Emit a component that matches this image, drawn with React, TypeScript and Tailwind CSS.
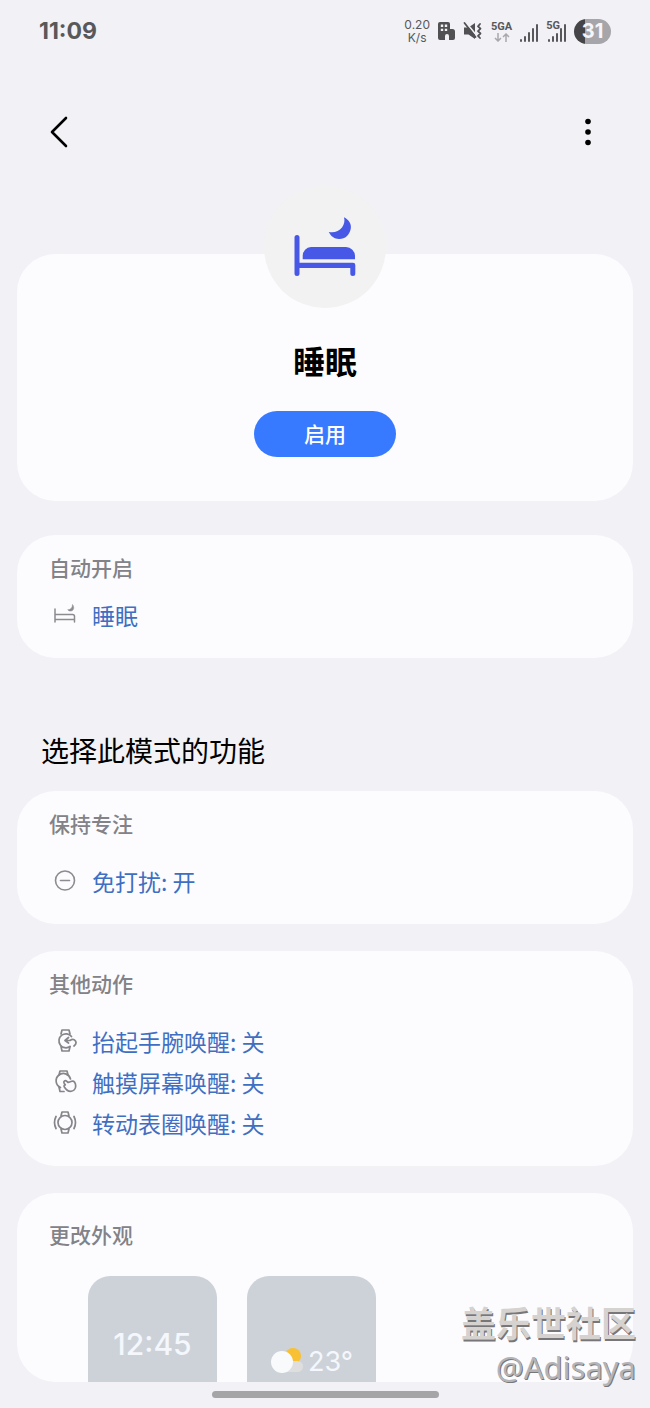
import type { ReactNode } from "react";

const cardClass = "rounded-[38px] bg-[#fcfcff] px-8";

const StatusBar = () => (
  <div className="flex h-[62px] items-center justify-between px-[39px] font-[Inter,'Noto_Sans_CJK_SC',sans-serif] text-[#58585b]">
    <span className="text-[23px] font-bold">11:09</span>
    <div className="flex items-center gap-2">
      <div className="text-center text-[12px] leading-[13px]">
        <div>0.20</div>
        <div>K/s</div>
      </div>
      <svg width="17" height="20" viewBox="0 0 17 20" aria-hidden="true">
        <path
          fill="#515154"
          d="M2 1h8a2 2 0 0 1 2 2v5h2.500a2.500 2.500 0 0 1 2.500 2.500V17a2 2 0 0 1-2 2h-4v-4a2 2 0 0 0-4 0v4H2a2 2 0 0 1-2-2V3a2 2 0 0 1 2-2Z"
        />
        <path fill="#f1f1f6" d="M2.800 3.500h2.400v2.400H2.800zM6.800 3.500h2.400v2.400H6.800zM2.800 7.700h2.400v2.400H2.800zM6.800 7.700h2.400v2.400H6.800z" />
      </svg>
      <svg width="20" height="20" viewBox="0 0 20 20" fill="none" aria-hidden="true">
        <path fill="#515154" d="M1 6.500h4.500L12 2v16l-6.500-4.500H1Z" />
        <path stroke="#f1f1f6" strokeWidth="1.800" d="M2.500 1l11.500 14" />
        <path stroke="#515154" strokeWidth="1.800" strokeLinecap="round" d="M1.500 2l11 14" />
        <path
          stroke="#515154"
          strokeWidth="1.800"
          strokeLinecap="round"
          strokeLinejoin="round"
          d="M17 3l-2 2.300 2.500 2.400-2.500 2.400 2.500 2.400-2.500 2.300 2 2.200"
        />
      </svg>
      <div className="flex flex-col items-center">
        <span className="font-[Roboto,sans-serif] text-[11px] leading-3 font-bold">5GA</span>
        <svg width="16" height="9" viewBox="0 0 16 9" fill="none" stroke="#a9a9ad" strokeWidth="1.500" aria-hidden="true">
          <path d="M4 0v8M1 5l3 3 3-3M12 9V1M9 4l3-3 3 3" />
        </svg>
      </div>
      <svg width="18" height="22" viewBox="0 0 18 22" fill="#58585b" aria-hidden="true">
        <rect x="0" y="19" width="2" height="3" rx="1" />
        <rect x="4" y="16" width="2" height="6" rx="1" />
        <rect x="8" y="12" width="2" height="10" rx="1" />
        <rect x="12" y="8" width="2" height="14" rx="1" />
        <rect x="16" y="4" width="2" height="18" rx="1" />
      </svg>
      <div className="flex items-start">
        <span className="-mr-3 font-[Roboto,sans-serif] text-[11px] leading-3 font-bold">5G</span>
        <svg width="18" height="22" viewBox="0 0 18 22" fill="#58585b" aria-hidden="true">
          <rect x="0" y="19" width="2" height="3" rx="1" />
          <rect x="4" y="16" width="2" height="6" rx="1" />
          <rect x="8" y="13" width="2" height="9" rx="1" />
          <rect x="12" y="8" width="2" height="14" rx="1" />
          <rect x="16" y="4" width="2" height="18" rx="1" />
        </svg>
      </div>
      <div className="flex h-[25px] w-[37px] items-center justify-center rounded-full bg-linear-to-r from-[#454548] from-31% to-[#a6a6aa] to-31% text-[20px] leading-6 font-bold text-[#f6f6fa]">
        31
      </div>
    </div>
  </div>
);

const BedIcon = () => (
  <svg width="64" height="64" viewBox="0 0 64 64" fill="#4758e6" aria-hidden="true">
    <path d="M51 2.300C56 5 58.700 9 57.700 14C56.500 20 52 24.200 46 24C41.500 23.800 38 21.500 35.800 17C41 18 46 16.500 49 12.500C51.300 9.500 52 6 51 2.300Z" />
    <path d="M4 20a2.500 2.500 0 0 1 2.500 2.500V47.700H60a2.300 2.300 0 0 1 2.300 2.300v8.500a2.500 2.500 0 0 1-5 0V53H6.500v5.500a2.500 2.500 0 0 1-5 0v-36A2.500 2.500 0 0 1 4 20Z" />
    <path d="M18 32H53a9 9 0 0 1 9 9v3.300H9.700V41A9 9 0 0 1 18 32Z" />
  </svg>
);

const SmallBedIcon = () => (
  <svg width="24" height="24" viewBox="0 0 24 24" fill="none" stroke="#8b8b90" strokeWidth="1.500" aria-hidden="true">
    <path strokeLinecap="round" d="M2 6v13M2 16.500h19.500V19M2 11.500h17.500a2 2 0 0 1 2 2v3" />
    <path fill="#8b8b90" strokeWidth="0.500" d="M19.500 1.500c2 2.500 1.500 6-1.500 6.500-1.500.2-2.500-.3-3.300-1.300 3 .2 4.800-2 4.800-5.200Z" />
  </svg>
);

const DisturbIcon = () => (
  <svg width="24" height="24" viewBox="0 0 24 24" fill="none" stroke="#8b8b90" strokeWidth="1.600" strokeLinecap="round" aria-hidden="true">
    <circle cx="12" cy="11.500" r="9.500" />
    <path d="M7.500 11.500h9" />
  </svg>
);

const RaiseIcon = () => (
  <svg width="24" height="24" viewBox="0 0 24 24" fill="none" stroke="#85858a" strokeWidth="1.700" strokeLinecap="round" strokeLinejoin="round" aria-hidden="true">
    <path d="M8 5l1-4h7l1 4M8 17.500L9 22h7l1-4.500" />
    <path d="M18.500 7.500A7 7 0 1 0 17 17.500" />
    <path d="M15.500 8.500L12 11.500l3.500 2.500M12 11.500h5c2-1.500 4-1.500 5.300.2 1.200 1.800.7 3.800-1.300 5.300" />
  </svg>
);

const TouchIcon = () => (
  <svg width="24" height="24" viewBox="0 0 24 24" fill="none" stroke="#85858a" strokeWidth="1.700" strokeLinecap="round" strokeLinejoin="round" aria-hidden="true">
    <path d="M6 5l1-4h7l1 4M6 17l1 4.500h4" />
    <path d="M17.500 9A7.300 7.300 0 1 0 7.500 17.500" />
    <path d="M11.500 11c-1.500 1-.3 2.500.8 3.800-1.500.2-1.600 1.700-.6 2.700 1.600 2.500 3.300 3.800 5.800 3.800 3.200 0 5.200-2.300 5.200-5.300s-1.500-5.500-4-4.800l-3.500 1.300-1.200-1c-.8-.8-1.700-1.200-2.500-.5Z" />
  </svg>
);

const RotateIcon = () => (
  <svg width="24" height="24" viewBox="0 0 24 24" fill="none" stroke="#85858a" strokeWidth="1.700" strokeLinecap="round" strokeLinejoin="round" aria-hidden="true">
    <circle cx="12" cy="11.500" r="7" />
    <path d="M8 5l1-4h6l1 4M8 18l1 4h6l1-4M3 5.500q-3 6 0 12M21 5.500q3 6 0 12" />
  </svg>
);

type RowProps = {
  icon: ReactNode;
  text: string;
};

const Row = ({ icon, text }: RowProps) => (
  <button type="button" className="flex h-[41px] w-full items-center gap-[11px] text-left">
    <span className="flex w-8 justify-center">{icon}</span>
    <span className="text-[23px] leading-7 text-[#3f6fc2]">{text}</span>
  </button>
);

const Label = ({ children }: { children: ReactNode }) => (
  <h3 className="text-[21px] leading-7 font-medium text-[#828287]">{children}</h3>
);

const actions = [
  { icon: <RaiseIcon />, text: "抬起手腕唤醒: 关" },
  { icon: <TouchIcon />, text: "触摸屏幕唤醒: 关" },
  { icon: <RotateIcon />, text: "转动表圈唤醒: 关" },
];

export default function App() {
  return (
    <div className="relative flex min-h-screen flex-col overflow-hidden bg-[#f1f1f6] font-['Noto_Sans_CJK_SC',sans-serif] text-black">
      <StatusBar />
      <header className="flex h-[140px] items-center justify-between px-11">
        <button type="button" aria-label="返回" className="flex size-8 items-center justify-center">
          <svg width="22" height="32" viewBox="0 0 22 32" fill="none" stroke="#000" strokeWidth="2.600" strokeLinecap="round" strokeLinejoin="round">
            <path d="M17 2L3 16l14 14" />
          </svg>
        </button>
        <button type="button" aria-label="更多选项" className="flex h-8 w-9 items-center justify-center">
          <svg width="8" height="28" viewBox="0 0 8 28">
            <circle cx="4" cy="3.500" r="2.800" />
            <circle cx="4" cy="14" r="2.800" />
            <circle cx="4" cy="24.500" r="2.800" />
          </svg>
        </button>
      </header>

      <main className="mt-[52px] px-[17px]">
        <section className={`${cardClass} flex flex-col items-center pb-11`}>
          <div className="-mt-[68px] flex size-[122px] items-center justify-center rounded-full bg-[#f2f2f2]">
            <BedIcon />
          </div>
          <h1 className="mt-[30px] text-[32px] leading-[44px] font-bold">睡眠</h1>
          <button
            type="button"
            className="mt-[29px] h-[46px] w-[142px] rounded-full bg-[#387aff] text-[21px] font-medium text-white"
          >
            启用
          </button>
        </section>

        <section className={`${cardClass} mt-[34px] pt-[18px] pb-[23px]`}>
          <Label>自动开启</Label>
          <div className="mt-[13px]">
            <Row icon={<SmallBedIcon />} text="睡眠" />
          </div>
        </section>

        <h2 className="mt-[72px] mb-[21px] px-6 text-[28px] leading-10">选择此模式的功能</h2>

        <section className={`${cardClass} pt-[18px] pb-[23px]`}>
          <Label>保持专注</Label>
          <div className="mt-[23px]">
            <Row icon={<DisturbIcon />} text="免打扰: 开" />
          </div>
        </section>

        <section className={`${cardClass} mt-[27px] pt-[18px] pb-[23px]`}>
          <Label>其他动作</Label>
          <div className="mt-[23px]">
            {actions.map((action) => (
              <Row key={action.text} icon={action.icon} text={action.text} />
            ))}
          </div>
        </section>

        <section className={`${cardClass} mt-[27px] pt-[27px]`}>
          <Label>更改外观</Label>
          <div className="mt-7 flex gap-[30px] pl-[39px] font-[Inter,sans-serif] text-[#f4f7fc]">
            <div className="flex h-[106px] w-[129px] items-end justify-center rounded-t-[22px] bg-[#cdd2d9] pb-5">
              <span className="text-[30px] leading-9 font-medium">12:45</span>
            </div>
            <div className="flex h-[106px] w-[129px] items-end justify-center gap-1 rounded-t-[22px] bg-[#cdd2d9] pb-1">
              <svg className="mb-1" width="34" height="26" viewBox="0 0 34 26" aria-hidden="true">
                <circle cx="23" cy="8" r="8" fill="#f8c033" />
                <rect x="12" y="13" width="21" height="11" rx="5.500" fill="#dededf" />
                <circle cx="12" cy="14" r="11" fill="#f8fafb" />
              </svg>
              <span className="text-[27px] leading-8">23°</span>
            </div>
          </div>
        </section>
      </main>

      <div className="mx-auto mt-[9px] mb-[9px] h-[7px] w-[227px] rounded-full bg-[#a5a5a8]" />

      <div className="pointer-events-none absolute right-[14px] bottom-[19px] text-right text-[#d5d2d0]">
        <div className="text-[35px] leading-[46px] font-bold [text-shadow:1px_2px_0_#77777a]">盖乐世社区</div>
        <div className="font-['Noto_Sans',sans-serif] text-[31px] leading-[44px] text-[#b4b4b7] [text-shadow:1px_1px_0_#77777a]">
          @Adisaya
        </div>
      </div>
    </div>
  );
}
